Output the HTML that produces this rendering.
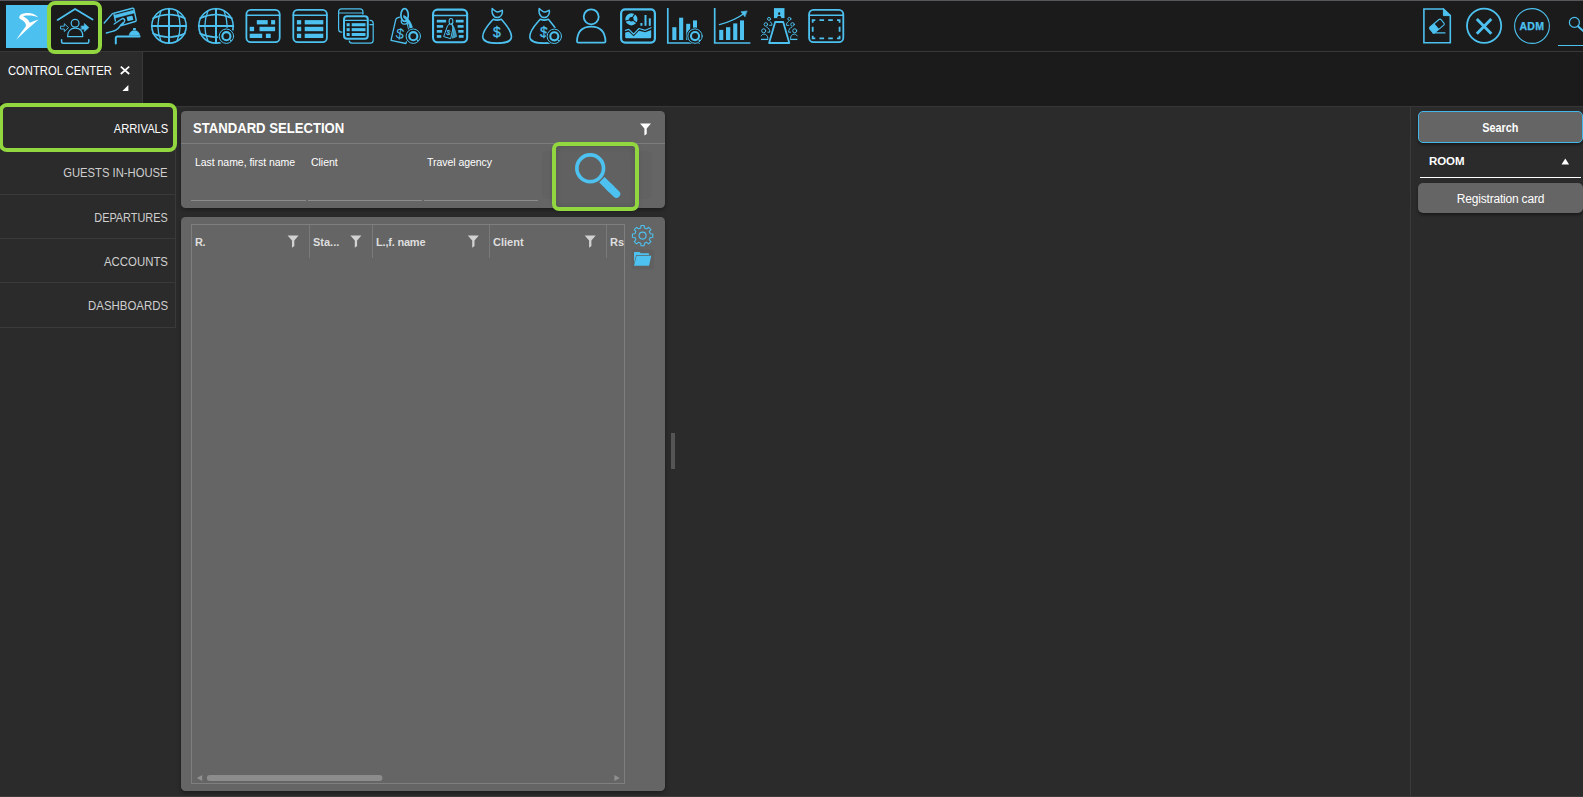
<!DOCTYPE html>
<html><head><meta charset="utf-8"><title>Control Center</title>
<style>
*{box-sizing:border-box;margin:0;padding:0}
html,body{width:1583px;height:797px;overflow:hidden;background:#2b2b2b;font-family:"Liberation Sans",sans-serif;color:#fff}
.abs{position:absolute}
#top{left:0;top:0;width:1583px;height:52px;background:#1b1b1b;border-top:1px solid #56565b}
#strip{left:0;top:51px;width:1583px;height:56px;background:#1b1b1b;border-top:1px solid #383838;border-bottom:1px solid #373737}
#tab{left:0;top:52px;width:143px;height:51px;background:#2b2b2b;border-right:1px solid #383838}
#tab .t{left:8px;top:63px;font-size:13px;white-space:nowrap}
.ico{position:absolute;top:0;left:0;overflow:visible}
.nav{left:0;width:176px;height:44px;border-right:1px solid #3a3a3a;border-bottom:1px solid #3a3a3a;text-align:right;padding-right:7px;font-size:13px;line-height:44px;color:#cfcfcf;white-space:nowrap}
.nav span{display:inline-block;transform-origin:100% 50%;position:relative;top:0}
.hl{border:4.4px solid #92d640;border-radius:7.5px;position:absolute}
.panel{background:#656565;border-radius:4.5px;box-shadow:0 2px 4px rgba(0,0,0,.35)}
.lbl{font-size:10.5px;letter-spacing:-.04px;white-space:nowrap;color:#fff}
.ul{height:1px;background:#8c8c8c;top:200px}
.hd{font-size:11px;font-weight:bold;color:#dedede;white-space:nowrap;top:236px}
.cs{width:1px;background:#7a7a7a;top:225px;height:33px}
</style></head><body>
<div id="top" class="abs"></div>
<div id="strip" class="abs"></div>
<div id="tab" class="abs"></div>
<div class="abs" style="left:8px;top:63px;font-size:13px;line-height:15px;white-space:nowrap;transform:scaleX(.864);transform-origin:0 0" id="cc">CONTROL CENTER</div>

<!-- NAV -->
<div class="abs nav" style="top:107px;height:43px;color:#fff" ><span id="n1" style="transform:scaleX(0.863)">ARRIVALS</span></div>
<div class="abs nav" style="top:150px;height:45px;line-height:45px"><span id="n2" style="transform:scaleX(0.866)">GUESTS IN-HOUSE</span></div>
<div class="abs nav" style="top:195px;padding-top:1px"><span id="n3" style="transform:scaleX(0.837)">DEPARTURES</span></div>
<div class="abs nav" style="top:239px;padding-top:1px"><span id="n4" style="transform:scaleX(0.877)">ACCOUNTS</span></div>
<div class="abs nav" style="top:283px;height:45px;line-height:45px"><span id="n5" style="transform:scaleX(0.879)">DASHBOARDS</span></div>

<!-- PANEL 1 -->
<div class="abs panel" style="left:181px;top:111px;width:484px;height:97px"></div>
<div class="abs" style="left:181px;top:143px;width:484px;height:1px;background:#7d7d7d"></div>
<div class="abs" id="ss" style="left:193px;top:120px;font-size:14px;transform:scaleX(.936);transform-origin:0 0;font-weight:bold;white-space:nowrap">STANDARD SELECTION</div>
<div class="abs lbl" id="l1" style="left:195px;top:156px">Last name, first name</div>
<div class="abs lbl" id="l2" style="left:311px;top:156px">Client</div>
<div class="abs lbl" id="l3" style="left:427px;top:156px">Travel agency</div>
<div class="abs ul" style="left:191px;width:115px"></div>
<div class="abs ul" style="left:308px;width:114px"></div>
<div class="abs ul" style="left:424px;width:114px"></div>

<div class="abs" style="left:542px;top:151px;width:110px;height:48px;background:#626262;border-radius:5px"></div>
<div class="abs" style="left:554px;top:145px;width:83px;height:64px;background:#616161;border-radius:6px;box-shadow:0 1px 5px rgba(0,0,0,.35),inset 0 0 7px rgba(0,0,0,.22)"></div>
<!-- PANEL 2 -->
<div class="abs panel" style="left:181px;top:217px;width:484px;height:574px"></div>
<div class="abs" style="left:191px;top:224px;width:434px;height:560px;border:1px solid #7f7f7f"></div>
<div class="abs cs" style="left:309px"></div>
<div class="abs cs" style="left:372px"></div>
<div class="abs cs" style="left:489px"></div>
<div class="abs cs" style="left:606px"></div>
<div class="abs hd" id="h1" style="left:195px;letter-spacing:-.5px">R.</div>
<div class="abs hd" id="h2" style="left:313px">Sta...</div>
<div class="abs hd" id="h3" style="left:376px;letter-spacing:-.2px">L.,f. name</div>
<div class="abs hd" id="h4" style="left:493px">Client</div>
<div class="abs hd" id="h5" style="left:610px;width:14.2px;overflow:hidden">Rsv</div>

<!-- splitter -->
<div class="abs" style="left:671px;top:433px;width:4px;height:36px;background:#555"></div>

<!-- RIGHT -->
<div class="abs" style="left:1410px;top:107px;width:1px;height:690px;background:#3a3a3a"></div>
<div class="abs" style="left:1418px;top:111px;width:164.5px;height:32px;background:#656565;border:1.3px solid #45b6e8;border-radius:5px;box-shadow:0 2px 3px rgba(0,0,0,.4)"></div>
<div class="abs" id="sb" style="left:1418px;top:121px;width:164.5px;text-align:center;font-size:12px;transform:scaleX(.905);font-weight:bold">Search</div>
<div class="abs" id="rm" style="left:1429px;top:155px;font-size:11.5px;letter-spacing:-.1px;font-weight:bold">ROOM</div>
<div class="abs" style="left:1420px;top:177px;width:161px;height:1px;background:#fff"></div>
<div class="abs" style="left:1418px;top:183px;width:164.5px;height:30px;background:#656565;border-radius:5px;box-shadow:0 2px 3px rgba(0,0,0,.4)"></div>
<div class="abs" id="rc" style="left:1418px;top:192px;width:165px;text-align:center;font-size:12px;letter-spacing:-.2px">Registration card</div>

<!-- bottom line -->
<div class="abs" style="left:0;top:796px;width:1583px;height:1px;background:#3b3b3b"></div>

<!-- ICONS SVG -->
<svg class="ico" width="1583" height="797" viewBox="0 0 1583 797" fill="none" stroke="#4dc1ef" stroke-width="1.8" stroke-linecap="round" stroke-linejoin="round" id="icons">
<!--ICONS-->
<!-- logo -->
<rect x="6" y="5" width="42" height="43" fill="#4cc0ef" stroke="none"/>
<path d="M16.2 39.8 C19.5 34.5 23.5 29.5 25.9 26.2 C26.3 23.5 24 21.2 21.5 19.8 C19.5 18.7 18.8 17.6 19.4 16.4 C20.5 14 24 13.1 27.3 13.1 C31.5 13.1 36 14.6 38 17.4 C35 15.8 31 15.3 27.5 15.5 C25.5 15.6 23.8 15.8 23.1 16.3 C25.5 17.6 28.6 19.8 29.8 22.7 C32.5 21.5 35.5 20.5 38.7 19.5 C31 26 23 33 16.2 39.8 Z" fill="#fff" stroke="none"/>
<!-- house / arrivals (center 75) -->
<path d="M57.6 19.9 L75.1 8.9 L92.6 19.5"/>
<g stroke-width="1.2">
<circle cx="75.1" cy="23.3" r="3.9"/>
<path d="M67.6 36.6 C67.6 31.2 70.6 28.2 75.2 28.2 C79.9 28.2 82.8 31.2 82.8 36.6 Z"/>
<path d="M60.9 26.2 H64.3 V23.7 L68.5 27.6 L64.3 31.5 V29 H60.9 Z" stroke-width=".9" stroke-linejoin="miter"/>
<path d="M81.4 26 h2.9 v-2.6 l4.6 4.2 l-4.6 4.2 v-2.6 h-2.9 z" fill="#4dc1ef" stroke-width=".6"/>
</g>
<path d="M61.6 39.8 v1.9 q0 1.5 1.5 1.5 h24.2 q1.5 0 1.5 -1.5 v-1.9" stroke-width="1.5"/>
<!-- hand with card (center 122) -->
<g stroke-width="1.4">
<path d="M104.2 23 L112.4 13.6"/>
<path d="M115.4 21 L113.8 13.2 L132.4 8.3 Q133.6 8 133.9 9.2 L136.2 20 Q136.4 21.2 135.2 21.5 L121.4 25.6"/>
<path d="M114.6 15.2 L133.6 10.2 L134.3 13 L115.2 18 Z" fill="#4dc1ef" stroke-width=".6"/>
<rect x="127" y="16.2" width="6" height="4.4" rx=".7" transform="rotate(-14 130 18.4)" fill="#4dc1ef" stroke="none"/>
<path d="M114.2 24 L121.6 19 C123.4 17.8 125.6 19.6 124.4 21.6 L122.4 24.6"/>
<path d="M106.4 33 C110 32.2 113.5 31.4 115.8 30.2 C118.6 28.8 119.4 26.6 121 24.8 L123.4 22.6"/>
</g>
<path d="M129 35.4 C129.4 32.4 131.6 30.6 134.4 30.6 C137.2 30.6 139.4 32.4 139.9 35.4 Z" fill="#4dc1ef" stroke-width=".4"/>
<rect x="133" y="27.9" width="2.9" height="2.2" rx=".5" fill="#4dc1ef" stroke="none"/>
<path d="M115.8 43.4 V37.9 Q115.8 36.4 117.3 36.4 H139.6" stroke-width="2"/>

<!-- globe --><g stroke-width="1.3"><circle cx="169" cy="25.9" r="17.2" stroke-width="1.6"/><path d="M169 8.7 V43.099999999999994 M151.8 25.9 H186.2" stroke-width="2"/><path d="M161 10.7 Q154.7 25.9 161 41.099999999999994 M177 10.7 Q183.3 25.9 177 41.099999999999994"/><path d="M153 18.299999999999997 Q169 10.899999999999999 185 18.299999999999997" stroke-width="1.5"/><path d="M153 33.5 Q169 40.9 185 33.5" stroke-width="1.5"/></g>
<!-- globe gear --><g stroke-width="1.3"><circle cx="216" cy="25.9" r="17.2" stroke-width="1.6"/><path d="M216 8.7 V43.099999999999994 M198.8 25.9 H233.2" stroke-width="2"/><path d="M208 10.7 Q201.7 25.9 208 41.099999999999994 M224 10.7 Q230.3 25.9 224 41.099999999999994"/><path d="M200 18.299999999999997 Q216 10.899999999999999 232 18.299999999999997" stroke-width="1.5"/><path d="M200 33.5 Q216 40.9 232 33.5" stroke-width="1.5"/></g><circle cx="226.4" cy="36.2" r="8.5" fill="#1b1b1b" stroke="none"/><circle cx="226.4" cy="36.2" r="7.2" stroke-width="1"/><circle cx="226.4" cy="36.2" r="4.05" stroke-width="2.1"/><circle cx="230.8" cy="40.5" r=".9" fill="#4dc1ef" stroke="none"/>
<!-- gantt --><rect x="246.4" y="9.9" width="33.3" height="32.3" rx="4.4" stroke-width="1.8"/><path d="M246.5 15.2 H279.6" stroke-width="1.5"/><rect x="256.8" y="20.1" width="10.9" height="4.3" fill="#4dc1ef" stroke="none"/><rect x="271.1" y="20.1" width="4.0" height="4.3" fill="#4dc1ef" stroke="none"/><rect x="249.7" y="26.8" width="4.4" height="4.4" fill="#4dc1ef" stroke="none"/><rect x="259.5" y="26.8" width="15.6" height="4.4" fill="#4dc1ef" stroke="none"/><rect x="249.7" y="33.7" width="12.5" height="4.3" fill="#4dc1ef" stroke="none"/><rect x="265.9" y="33.7" width="4.8" height="4.3" fill="#4dc1ef" stroke="none"/>
<!-- list --><rect x="293.29999999999995" y="9.9" width="33.6" height="32.3" rx="4.4" stroke-width="1.8"/><path d="M293.4 15.2 H326.8" stroke-width="1.5"/><rect x="296.9" y="20.1" width="4.3" height="4.3" fill="#4dc1ef" stroke="none"/><rect x="304.7" y="20.1" width="18.6" height="4.3" fill="#4dc1ef" stroke="none"/><rect x="296.9" y="26.8" width="4.3" height="4.4" fill="#4dc1ef" stroke="none"/><rect x="304.7" y="26.8" width="18.6" height="4.4" fill="#4dc1ef" stroke="none"/><rect x="296.9" y="33.7" width="4.3" height="4.3" fill="#4dc1ef" stroke="none"/><rect x="304.7" y="33.7" width="18.6" height="4.3" fill="#4dc1ef" stroke="none"/>
<!-- multi windows (center 356) -->
<g stroke-width="1.2">
<rect x="338.6" y="8.8" width="24.3" height="23.4" rx="3"/>
<path d="M338.6 13 H362.9"/>
<rect x="349.2" y="20.4" width="24" height="22.8" rx="3"/>
<path d="M349.2 24.6 H373.2"/>
<rect x="342.3" y="14.6" width="27.2" height="25.8" rx="4.4" fill="#1b1b1b" stroke="none"/>
<rect x="344" y="16.3" width="23.8" height="22.4" rx="3" stroke-width="2"/>
<path d="M344.4 20.4 H367.4" stroke-width="1.3"/>
</g>
<g fill="#4dc1ef" stroke="none">
<rect x="346.6" y="23.2" width="3.1" height="3.1"/><rect x="351.7" y="23.2" width="13.8" height="3.1"/>
<rect x="346.6" y="28.1" width="3.1" height="3.1"/><rect x="351.7" y="28.1" width="13.8" height="3.1"/>
<rect x="346.6" y="33" width="3.1" height="3"/><rect x="351.7" y="33" width="13.8" height="3"/>
</g>
<!-- price tag gear (center 406) -->
<g stroke-width="1.3">
<path d="M399.4 17.2 L397 18.2 Q396 18.7 395.7 19.8 L391 40.3 L405.8 43.5 L408 38"/>
<path d="M401.2 20.6 A3.4 3.4 0 0 0 408 21"/>
<ellipse cx="404.6" cy="15" rx="3.7" ry="6.4" stroke-width="1.7"/>
<path d="M404 15.6 C407 17 410.6 21 412.4 27.4 L410 28.6 C409.4 24 407.4 20 404 17.8 Z" fill="#4dc1ef" stroke-width=".8"/>
<path d="M406.6 20.8 L408.6 29.6" stroke-width="1"/>
</g>
<text x="400" y="38.8" font-family="Liberation Sans, sans-serif" font-size="14.5" fill="#4dc1ef" stroke="none" text-anchor="middle" transform="rotate(9 400 33.5)">$</text>

<!-- gear for tag --><circle cx="413.3" cy="36.2" r="8.5" fill="#1b1b1b" stroke="none"/><circle cx="413.3" cy="36.2" r="7.2" stroke-width="1"/><circle cx="413.3" cy="36.2" r="4.05" stroke-width="2.1"/><circle cx="417.7" cy="40.5" r=".9" fill="#4dc1ef" stroke="none"/>
<!-- rate win --><rect x="433.05" y="9.65" width="34.1" height="32.6" rx="4.4" stroke-width="2.1"/><path d="M433 15.6 H467.2" stroke-width="1.5"/>
<!-- rate window (center 450) -->
<g fill="#4dc1ef" stroke="none">
<rect x="436.8" y="19.8" width="9.3" height="2.7"/><rect x="455.8" y="19.8" width="7.8" height="2.7"/>
<rect x="436.8" y="25.1" width="6.3" height="2.6"/><rect x="457.6" y="25.1" width="6" height="2.6"/>
<rect x="436.8" y="30" width="5.4" height="2.7"/><rect x="458.2" y="30" width="5.4" height="2.7"/>
<rect x="436.8" y="35.1" width="4.5" height="2.7"/><rect x="458.8" y="35.1" width="4.8" height="2.7"/>
</g>
<g stroke-width="1">
<path d="M449.6 24 L447.6 25.6 L443.7 36.6 L450.7 38.7 L453.2 27.4 L452.4 25.4" />
<ellipse cx="451" cy="21.4" rx="1.9" ry="2.9" stroke-width="1.1"/>
<path d="M451.4 23.4 C453.4 25 455.4 30 456.6 36.6 L452.4 38.2 C453.4 33 453.6 28 451.4 23.4 Z" fill="#4dc1ef" fill-opacity=".75" stroke-width=".7"/>
</g>
<text x="448.5" y="35.2" font-family="Liberation Sans, sans-serif" font-size="7.5" font-weight="bold" fill="#4dc1ef" stroke="none" text-anchor="middle" transform="rotate(14 448.5 32.4)">$</text>

<!-- bag1 --><g transform="translate(0 0)"><path d="M493.2 19.2 C489 24 482 31 482.8 37.4 C483.6 42.6 490 43.1 497.1 43.1 C504.2 43.1 510.6 42.6 511.4 37.4 C512.2 31 505.4 24 501.3 19.2 Q497.2 21 493.2 19.2 Z" stroke-width="1.6"/><path d="M492.2 8.6 C494 10 495.6 11.8 497.2 12 C498.8 12 500.6 11 502.3 10.2 C502.8 13 502 15.4 499.6 17 Q497.2 17.9 494.8 17 C492.6 15 491.6 11.6 492.2 8.6 Z" stroke-width="1.5"/><text x="497" y="36.8" font-family="Liberation Sans, sans-serif" font-size="14" fill="#4dc1ef" stroke="#4dc1ef" stroke-width=".3" text-anchor="middle">$</text></g>
<!-- bag2 --><g transform="translate(47 0)"><path d="M493.2 19.2 C489 24 482 31 482.8 37.4 C483.6 42.6 490 43.1 497.1 43.1 C504.2 43.1 510.6 42.6 511.4 37.4 C512.2 31 505.4 24 501.3 19.2 Q497.2 21 493.2 19.2 Z" stroke-width="1.6"/><path d="M492.2 8.6 C494 10 495.6 11.8 497.2 12 C498.8 12 500.6 11 502.3 10.2 C502.8 13 502 15.4 499.6 17 Q497.2 17.9 494.8 17 C492.6 15 491.6 11.6 492.2 8.6 Z" stroke-width="1.5"/><text x="497" y="36.8" font-family="Liberation Sans, sans-serif" font-size="14" fill="#4dc1ef" stroke="#4dc1ef" stroke-width=".3" text-anchor="middle">$</text></g><circle cx="554.3" cy="36.3" r="8.5" fill="#1b1b1b" stroke="none"/><circle cx="554.3" cy="36.3" r="7.2" stroke-width="1"/><circle cx="554.3" cy="36.3" r="4.05" stroke-width="2.1"/><circle cx="558.7" cy="40.6" r=".9" fill="#4dc1ef" stroke="none"/>
<!-- person --><circle cx="591.2" cy="16.8" r="7.5" stroke-width="1.8"/><path d="M578.4 42.7 Q577 42.7 577 41.2 C577.4 31.6 582.6 26.7 591.2 26.7 C599.8 26.7 605 31.6 605.5 41.2 Q605.5 42.7 604 42.7 Z" stroke-width="1.8"/>
<!-- dashboard --><rect x="621.1" y="9.4" width="33.8" height="33.2" rx="4" stroke-width="2.2"/><circle cx="631.4" cy="19.3" r="4.2" stroke-width="3.8"/><path d="M631.4 19.3 L635.4 13 M631.4 19.3 L637.4 23.4 M631.4 19.3 L624.6 21.6" stroke="#1b1b1b" stroke-width="1.1"/><rect x="640.4" y="23" width="2.0" height="2.8" fill="#4dc1ef" stroke="none"/><rect x="644.5" y="15" width="2.0" height="10.8" fill="#4dc1ef" stroke="none"/><rect x="648.8" y="18.3" width="2.0" height="7.5" fill="#4dc1ef" stroke="none"/><path d="M625.4 30.3 L628.8 29.4 L633.7 34.2 L639 28.5 L645.2 30.3 L651 27.7" stroke-width="1.2"/><path d="M625.2 32.6 L628.8 31.7 L633.7 36.2 L639 30.8 L645.2 32.2 L651.2 29.9 V37.3 Q651.2 38.3 650.2 38.3 H626.2 Q625.2 38.3 625.2 37.3 Z" fill="#4dc1ef" stroke="none"/>
<!-- barchart gear --><path d="M667.8 8 V43 H700" stroke-width="1.7" stroke-linecap="butt" stroke-linejoin="miter"/><rect x="672.3" y="27.2" width="4.1" height="12.8" fill="#4dc1ef" stroke="none"/><rect x="679.1" y="17.7" width="4.1" height="22.3" fill="#4dc1ef" stroke="none"/><rect x="686.2" y="23.8" width="4.0" height="16.2" fill="#4dc1ef" stroke="none"/><rect x="693" y="20.4" width="4" height="9.6" fill="#4dc1ef" stroke="none"/><circle cx="695" cy="36.1" r="8.5" fill="#1b1b1b" stroke="none"/><circle cx="695" cy="36.1" r="7.2" stroke-width="1"/><circle cx="695" cy="36.1" r="4.05" stroke-width="2.1"/><circle cx="699.4" cy="40.4" r=".9" fill="#4dc1ef" stroke="none"/>
<!-- growth --><path d="M714.7 8 V43 H750.4" stroke-width="1.7" stroke-linecap="butt" stroke-linejoin="miter"/><rect x="719.2" y="29.9" width="4.1" height="10.1" fill="#4dc1ef" stroke="none"/><rect x="726" y="27.2" width="4.3" height="12.8" fill="#4dc1ef" stroke="none"/><rect x="733.2" y="23.4" width="4.1" height="16.6" fill="#4dc1ef" stroke="none"/><rect x="740" y="20.4" width="4" height="19.6" fill="#4dc1ef" stroke="none"/><path d="M719.4 24.6 C729 22 738 18 744 13.4" stroke-width="1.3"/><path d="M746.8 11 L741 11.8 L744.8 16.6 Z" fill="#4dc1ef" stroke-width=".6"/>
<!-- conference --><rect x="773.95" y="8.1" width="10.5" height="10.0" fill="#4dc1ef" stroke="none"/><ellipse cx="779.2" cy="13.7" rx="1.05" ry="1.35" fill="#1b1b1b" stroke="none"/><path d="M777.2 18.1 V16.9 L778.2 15.9 H780.2 L781.2 16.9 V18.1 Z" fill="#1b1b1b" stroke="none"/><path d="M775.2 22 H783.2 L789.3 43 H769.1 Z" stroke-width="1.8" stroke-linejoin="round"/><g stroke-width=".95"><circle cx="769.0" cy="18.9" r="1.5"/><circle cx="765.9" cy="24.4" r="1.75"/><circle cx="763.7" cy="30.8" r="2"/><path d="M770.1 21.6 C771.4 22.4 772.0 23.6 772.0 25.3 H769.6"/><path d="M766.8 27.2 C768.6 27.8 769.8 29.6 769.8 32.2 H767.8"/><path d="M761.2 35.9 C762.0 34.6 763.0 34.1 764.0 34.1 C766.4 34.1 767.8 36 767.9 38.4"/></g><path d="M761.0 39.4 H768.2" stroke-width="1.3" stroke-linecap="butt"/><g stroke-width=".95"><circle cx="789.4" cy="18.9" r="1.5"/><circle cx="792.5" cy="24.4" r="1.75"/><circle cx="794.7" cy="30.8" r="2"/><path d="M788.3 21.6 C787.0 22.4 786.4 23.6 786.4 25.3 H788.8"/><path d="M791.6 27.2 C789.8 27.8 788.6 29.6 788.6 32.2 H790.6"/><path d="M797.2 35.9 C796.4 34.6 795.4 34.1 794.4 34.1 C792.0 34.1 790.6 36 790.5 38.4"/></g><path d="M797.4 39.4 H790.2" stroke-width="1.3" stroke-linecap="butt"/>
<!-- dashed win --><rect x="809.1" y="9.9" width="34.2" height="32.3" rx="4.4" stroke-width="1.8"/><path d="M809.2 15.2 H843.2" stroke-width="1.5"/><path d="M812.7 22.8 V20.2 H815.3000000000001 M837.0 20.2 H839.6 V22.8 M839.6 35.699999999999996 V38.3 H837.0 M815.3000000000001 38.3 H812.7 V35.699999999999996 M819.47 20.2 h4.6 M828.23 20.2 h4.6 M819.47 38.3 h4.6 M828.23 38.3 h4.6 M812.7 26.80 v4.9 M839.6 26.80 v4.9" stroke-width="1.8" stroke-linecap="butt" stroke-linejoin="miter"/>
<!-- doc eraser --><path d="M1423.9 9 H1443.4 L1450.3 15.6 V42.8 H1423.9 Z" stroke-width="1.6" stroke-linejoin="miter"/><path d="M1443.4 9 V15.6 H1450.3 Z" fill="#4dc1ef" stroke-width="1"/><g transform="rotate(-40 1437 26)"><rect x="1429.6" y="22.3" width="14.6" height="7.4" rx="1.5" stroke-width="1.1"/><path d="M1429.6 23.8 Q1429.6 22.3 1431.1 22.3 H1436.6 V29.7 H1431.1 Q1429.6 29.7 1429.6 28.2 Z" fill="#4dc1ef" stroke="none"/></g><path d="M1433 32.9 H1445" stroke-width="1.1"/>
<!-- x circle --><circle cx="1484.1" cy="25.8" r="17.1" stroke-width="1.8"/><path d="M1476.8 18.9 L1491.3 33.7 M1491.3 18.9 L1476.8 33.7" stroke-width="2.9" stroke-linecap="butt"/>
<!-- adm --><circle cx="1532" cy="26" r="17.4" stroke-width="1.1"/><text x="1531.9" y="29.9" font-family="Liberation Sans, sans-serif" font-size="10.5" font-weight="bold" fill="#4dc1ef" stroke="#4dc1ef" stroke-width=".25" text-anchor="middle" letter-spacing=".35">ADM</text>
<!-- search small --><circle cx="1574.4" cy="22.4" r="5" stroke-width="1.2"/><path d="M1578.2 26.4 L1586 33.6" stroke-width="2"/><path d="M1558 45.5 H1583" stroke-width="1" stroke-linecap="butt"/>
<!-- tab x --><path d="M120.8 66.6 L129.2 74 M129.2 66.6 L120.8 74" stroke="#fff" stroke-width="1.7" stroke-linecap="butt"/><path d="M128.4 85 V91 H122.4 Z" fill="#fff" stroke="none"/>
<!-- funnels --><path d="M640 123.4 H651 L646.7 128.4 V134.0 L644.4 135.6 V128.4 Z" fill="#fff" stroke="none"/><path d="M287.6 235.5 H298.6 L294.3 240.5 V246.1 L292.0 247.7 V240.5 Z" fill="#d2d2d2" stroke="none"/><path d="M350.4 235.5 H361.4 L357.09999999999997 240.5 V246.1 L354.79999999999995 247.7 V240.5 Z" fill="#d2d2d2" stroke="none"/><path d="M467.8 235.5 H478.8 L474.5 240.5 V246.1 L472.2 247.7 V240.5 Z" fill="#d2d2d2" stroke="none"/><path d="M584.7 235.5 H595.7 L591.4000000000001 240.5 V246.1 L589.1 247.7 V240.5 Z" fill="#d2d2d2" stroke="none"/>
<path d="M1561.5 164.6 L1565.3 158.6 L1569.1 164.6 Z" fill="#fff" stroke="none"/>
<!-- scrollbar --><path d="M202.2 775 V781 L196.8 778 Z" fill="#909090" stroke="none"/><path d="M614.4 775 V781 L619.8 778 Z" fill="#909090" stroke="none"/><rect x="206.8" y="775" width="175.6" height="6" rx="3" fill="#8c8c8c" stroke="none"/>
<!-- big magnifier --><circle cx="590.2" cy="168.3" r="13.35" stroke-width="3.7"/><path d="M601.9 179.8 L612 189.7" stroke-width="7.6" stroke-linecap="butt"/><path d="M609 186.8 L616.4 194" stroke-width="7.6"/>
<!-- gear icon --><path d="M644.44 243.28 L644.21 245.77 L640.99 245.77 L640.76 243.28 L638.47 242.34 L636.55 243.93 L634.27 241.65 L635.86 239.73 L634.92 237.44 L632.43 237.21 L632.43 233.99 L634.92 233.76 L635.86 231.47 L634.27 229.55 L636.55 227.27 L638.47 228.86 L640.76 227.92 L640.99 225.43 L644.21 225.43 L644.44 227.92 L646.73 228.86 L648.65 227.27 L650.93 229.55 L649.34 231.47 L650.28 233.76 L652.77 233.99 L652.77 237.21 L650.28 237.44 L649.34 239.73 L650.93 241.65 L648.65 243.93 L646.73 242.34 Z" stroke-width="1.1" stroke-linejoin="round"/><circle cx="642.6" cy="235.6" r="3.5" stroke-width="1.1"/>
<!-- folder --><rect x="631.5" y="249.5" width="22.5" height="20" rx="3" fill="#606060" stroke="none"/><path d="M634 263 V252.6 Q634 252 634.6 252 H639.6 L640.8 253.2 H648.4 Q649 253.2 649 253.8 V255 H636.2 Z" fill="#4dc1ef" stroke="none"/><path d="M636.6 255.7 H651.3 L649 265.8 H634 Z" fill="#4dc1ef" stroke="none"/>
<!--/ICONS-->
</svg>

<!-- highlights -->
<div class="hl" style="left:46.9px;top:.6px;width:55px;height:53px;border-width:4.5px;border-radius:8px"></div>
<div class="hl" style="left:-1px;top:102.9px;width:177.8px;height:48.9px;border-width:4.8px;border-radius:8px"></div>
<div class="hl" style="left:551.6px;top:142.1px;width:87.2px;height:68.5px;border-width:4px;border-radius:7px"></div>
</body></html>
